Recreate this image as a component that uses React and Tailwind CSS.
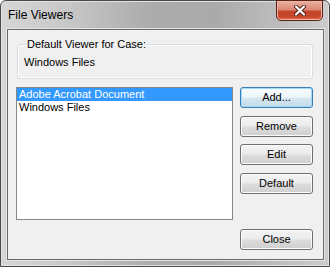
import React from 'react';

const font = { fontFamily: '"Liberation Sans", Arial, sans-serif' };

const WinButton = ({ children, focused, className = '' }) => (
  <button
    className={
      'w-[73px] h-[21px] rounded-[3px] border text-[11px] leading-[13px] text-black flex items-center justify-center ' +
      (focused
        ? 'border-[#3c7fb1] shadow-[inset_0_0_0_1px_#9fdcfb] bg-[linear-gradient(180deg,#f6fbfe_0%,#eef6fb_48%,#d6e7f1_52%,#c4dae7_100%)] '
        : 'border-[#707070] shadow-[inset_0_0_0_1px_#fbfbfb] bg-[linear-gradient(180deg,#f3f3f3_0%,#ebebeb_48%,#dddddd_52%,#cfcfcf_100%)] ') +
      className
    }
    style={font}
  >
    {children}
  </button>
);

const CloseX = () => (
  <svg width="12" height="11" viewBox="0 0 12 11">
    <path d="M2 1.5 L10 9.5 M10 1.5 L2 9.5" stroke="#4a1d14" strokeWidth="4" strokeLinecap="round" />
    <path d="M2 1.5 L10 9.5 M10 1.5 L2 9.5" stroke="#ffffff" strokeWidth="2.2" strokeLinecap="round" />
  </svg>
);

export default function App() {
  return (
    <div
      className="w-[330px] h-[267px] flex flex-col rounded-t-[6px] border border-[#4a4a4a] shadow-[inset_0_0_0_1px_#e2e2e2] bg-[linear-gradient(90deg,#d6d6d6_0%,#c8c8c8_20%,#acacac_45%,#aaaaaa_65%,#c0c0c0_88%,#cdcdcd_100%)]"
      style={font}
    >
      {/* title bar */}
      <div className="h-[28px] flex items-start justify-between">
        <span className="self-center pl-[7px] text-[12px] leading-[14px] text-black">File Viewers</span>
        <div className="-mt-px mr-[6px] w-[47px] h-[21px] rounded-b-[5px] border border-[#5a2218] shadow-[inset_0_0_0_1px_#f0b4a4] bg-[linear-gradient(180deg,#eab0a0_0%,#dc8a74_45%,#c4452c_55%,#c9482c_85%,#e07a55_100%)] flex items-center justify-center">
          <CloseX />
        </div>
      </div>

      {/* client area */}
      <div className="flex-1 ml-[6px] mr-[5px] mb-[6px] border border-[#6a6a6a] shadow-[0_0_0_1px_#e6e6e6] bg-[#f0f0f0] flex flex-col">
        {/* group box */}
        <div className="relative ml-[9px] mt-[14px] w-[296px] h-[35px] rounded-[3px] border border-[#d5dfe5] shadow-[inset_0_0_0_1px_#ffffff]">
          <span className="absolute left-[8px] top-[-7px] px-[1px] bg-[#f0f0f0] text-[11px] leading-[13px] text-black">
            Default Viewer for Case:
          </span>
          <div className="pl-[6px] pt-[11px] text-[11px] leading-[13px] text-black">Windows Files</div>
        </div>

        <div className="flex mt-[8px] ml-[8px]">
          {/* list box */}
          <div className="w-[217px] h-[133px] border border-[#828790] bg-white text-[11px] leading-[13px]">
            <div className="bg-[#3399ff] text-white pl-[2px]">Adobe Acrobat Document</div>
            <div className="text-black pl-[2px]">Windows Files</div>
          </div>

          {/* buttons */}
          <div className="ml-[7px] flex flex-col">
            <WinButton focused>Add...</WinButton>
            <WinButton className="mt-[8px]">Remove</WinButton>
            <WinButton className="mt-[7px]">Edit</WinButton>
            <WinButton className="mt-[8px]">Default</WinButton>
            <WinButton className="mt-[35px]">Close</WinButton>
          </div>
        </div>
      </div>
    </div>
  );
}
